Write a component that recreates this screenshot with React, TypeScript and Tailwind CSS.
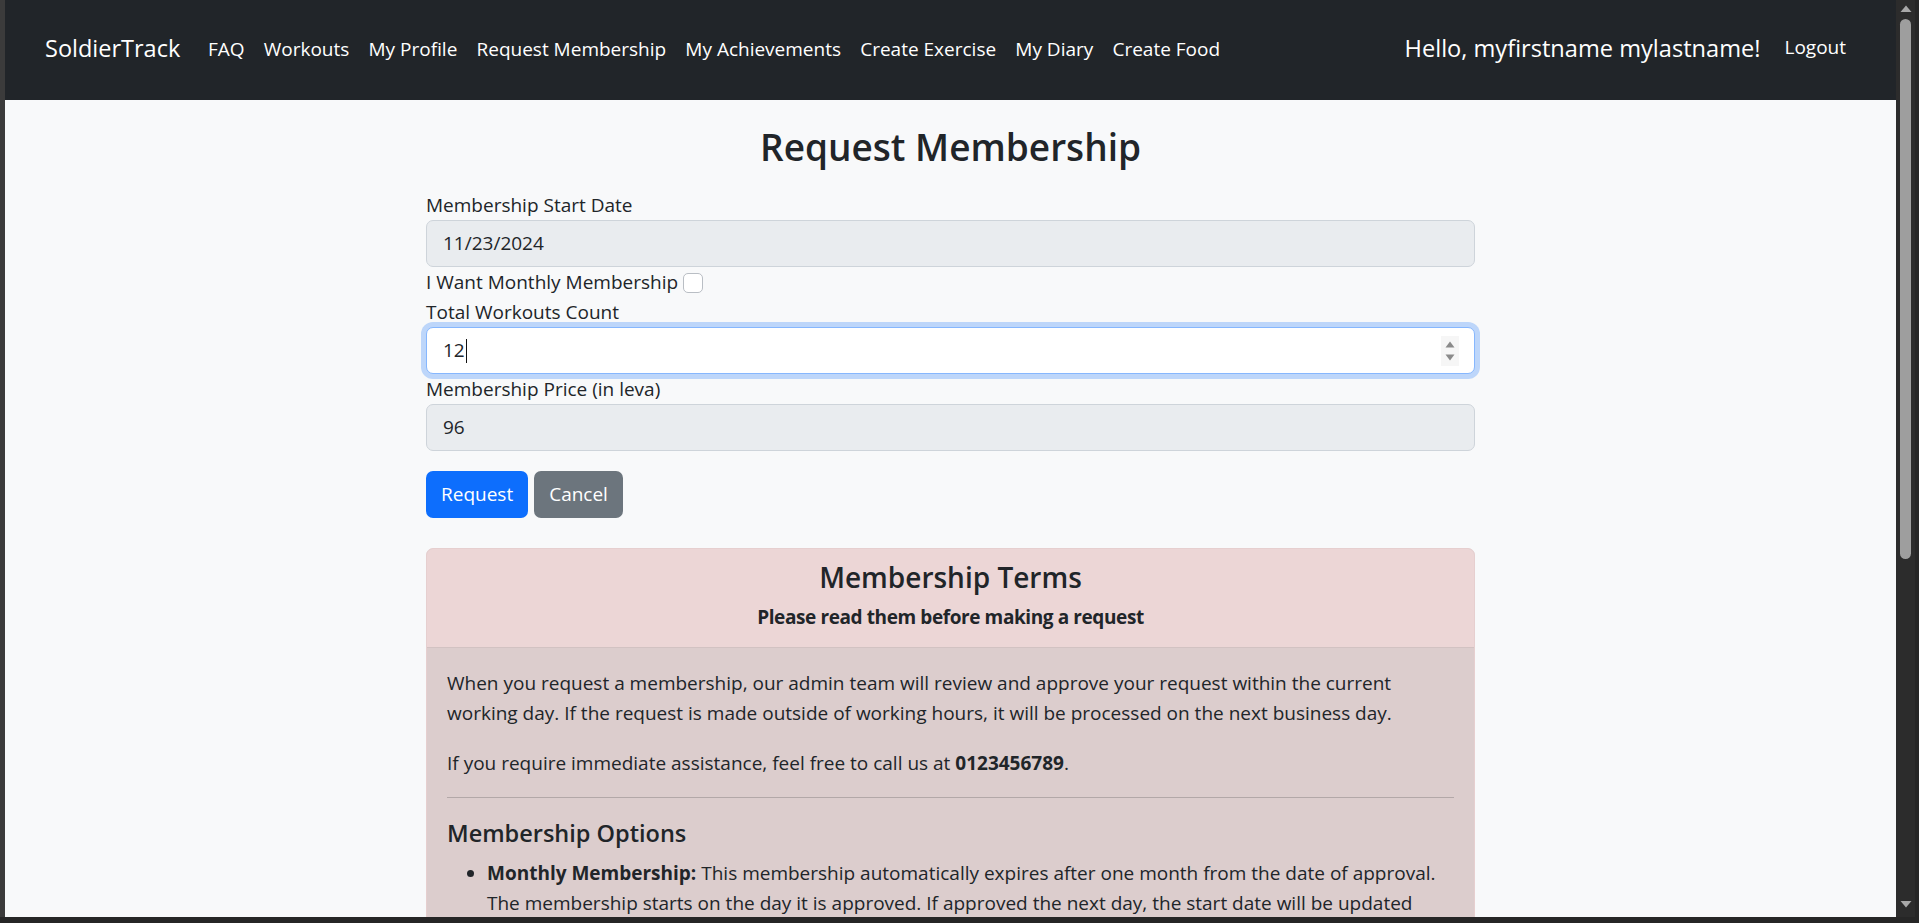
import React from "react";

const links = [
  "FAQ",
  "Workouts",
  "My Profile",
  "Request Membership",
  "My Achievements",
  "Create Exercise",
  "My Diary",
  "Create Food",
];

function Navbar() {
  return (
    <div className="h-[100px] shrink-0 bg-[#212529] flex items-center px-[40px] pb-[2px]">
      <div className="text-[23.5px] text-white leading-none mr-[18px]">SoldierTrack</div>
      <div className="flex items-center">
        {links.map((l) => (
          <div key={l} className="px-[9.6px] text-[19px] text-white leading-none">
            {l}
          </div>
        ))}
      </div>
      <div className="ml-auto flex items-center">
        <div className="text-[23.6px] text-white leading-none mr-[14px]">Hello, myfirstname mylastname!</div>
        <div className="px-[10px] text-[19px] text-white leading-none pb-[3px]">Logout</div>
      </div>
    </div>
  );
}

function Label({ children }: { children: React.ReactNode }) {
  return <div className="h-[30px] leading-[30px] text-[19px] text-[#212529]">{children}</div>;
}

function DisabledInput({ value }: { value: string }) {
  return (
    <div className="h-[47px] rounded-[7px] border border-[#ced4da] bg-[#e9ecef] flex items-center pl-[16px] text-[19px] text-[#212529]">
      {value}
    </div>
  );
}

function Form() {
  return (
    <div className="w-[1049px] mx-auto">
      <div className="h-[90px] flex items-start justify-center pt-[20px]">
        <h1 className="text-[37px] font-semibold leading-[54px] text-[#212529]">Request Membership</h1>
      </div>
      <Label>Membership Start Date</Label>
      <DisabledInput value="11/23/2024" />
      <div className="h-[30px] flex items-center text-[19px] text-[#212529] pt-[1px]">
        <span>I Want Monthly Membership</span>
        <span className="ml-[5px] w-[20px] h-[20px] rounded-[5px] border border-[#b9bec4] bg-white inline-block" />
      </div>
      <Label>Total Workouts Count</Label>
      <div className="h-[47px] rounded-[7px] border border-[#86b7fe] bg-white shadow-[0_0_0_5px_rgba(13,110,253,0.25)] flex items-center pl-[16px] pr-[16px] text-[19px] text-[#212529]">
        <span>12</span>
        <span className="w-[1px] h-[24px] bg-[#111] ml-[1px]" />
        <div className="ml-auto w-[18px] h-[30px] bg-[#f6f6f6] flex flex-col items-center justify-center gap-[6px] mr-[-1px]">
          <svg width="10" height="7" viewBox="0 0 10 7"><path d="M5 0.5 L9.5 6.5 L0.5 6.5 Z" fill="#8a8a8a" /></svg>
          <svg width="10" height="7" viewBox="0 0 10 7"><path d="M0.5 0.5 L9.5 0.5 L5 6.5 Z" fill="#8a8a8a" /></svg>
        </div>
      </div>
      <Label>Membership Price (in leva)</Label>
      <DisabledInput value="96" />
      <div className="flex gap-[6px] mt-[20px]">
        <div className="h-[47px] px-[15px] rounded-[7px] bg-[#0d6efd] text-white text-[19px] flex items-center">Request</div>
        <div className="h-[47px] px-[15px] rounded-[7px] bg-[#6c757d] text-white text-[19px] flex items-center">Cancel</div>
      </div>
      <div className="mt-[30px] rounded-[7px] border border-[#e6cfcf] overflow-hidden bg-[#dccdcd]">
        <div className="bg-[#ecd6d6] border-b border-[#d2c2c2] pt-[7px] pb-[15px] text-center text-[#212529]">
          <div className="text-[28px] font-semibold leading-[42px]">Membership Terms</div>
          <div className="text-[19px] font-bold leading-[30px] mt-[4px] tracking-[-0.4px]">Please read them before making a request</div>
        </div>
        <div className="px-[20px] pt-[20px] pb-[20px] text-[19px] leading-[30px] text-[#212529]">
          <p>
            When you request a membership, our admin team will review and approve your request within the current
            working day. If the request is made outside of working hours, it will be processed on the next business day.
          </p>
          <p className="mt-[20px]">
            If you require immediate assistance, feel free to call us at <b>0123456789</b>.
          </p>
          <div className="mt-[19px] border-t border-[#b3a8a8]" />
          <div className="mt-[20px] text-[23.5px] font-semibold leading-[30px]">Membership Options</div>
          <ul className="list-disc pl-[40px] mt-[10px]">
            <li>
              <b>Monthly Membership:</b> This membership automatically expires after one month from the date of approval.
              The membership starts on the day it is approved. If approved the next day, the start date will be updated
              accordingly.
            </li>
            <li>
              <b>Workouts Count Membership:</b> This membership expires after the selected number of workouts has been
              completed.
            </li>
          </ul>
        </div>
      </div>
    </div>
  );
}

function Scrollbar() {
  return (
    <div className="w-[19px] shrink-0 bg-[#2c2c2c] flex flex-col items-center">
      <svg width="12" height="8" viewBox="0 0 12 8" className="mt-[5px]">
        <path d="M6 0.5 L11.5 7 L0.5 7 Z" fill="#a8a8a8" />
      </svg>
      <div className="mt-[6px] w-[11px] h-[540px] rounded-[6px] bg-[#9e9e9e]" />
      <div className="flex-1" />
      <svg width="12" height="8" viewBox="0 0 12 8" className="mb-[9px]">
        <path d="M0.5 1 L11.5 1 L6 7.5 Z" fill="#a8a8a8" />
      </svg>
    </div>
  );
}

export default function App() {
  return (
    <div className="w-[1919px] h-[923px] flex flex-col bg-[#262626] overflow-hidden font-['Open_Sans',sans-serif]">
      <div className="flex flex-1 min-h-0">
        <div className="w-[5px] shrink-0 bg-[#3b3b3b]" />
        <div className="flex-1 min-w-0 flex flex-col bg-[#f8f9fa] overflow-hidden">
          <Navbar />
          <Form />
        </div>
        <Scrollbar />
        <div className="w-[4px] shrink-0 bg-[#262626]" />
      </div>
      <div className="h-[6px] shrink-0 bg-[#262626]" />
    </div>
  );
}
